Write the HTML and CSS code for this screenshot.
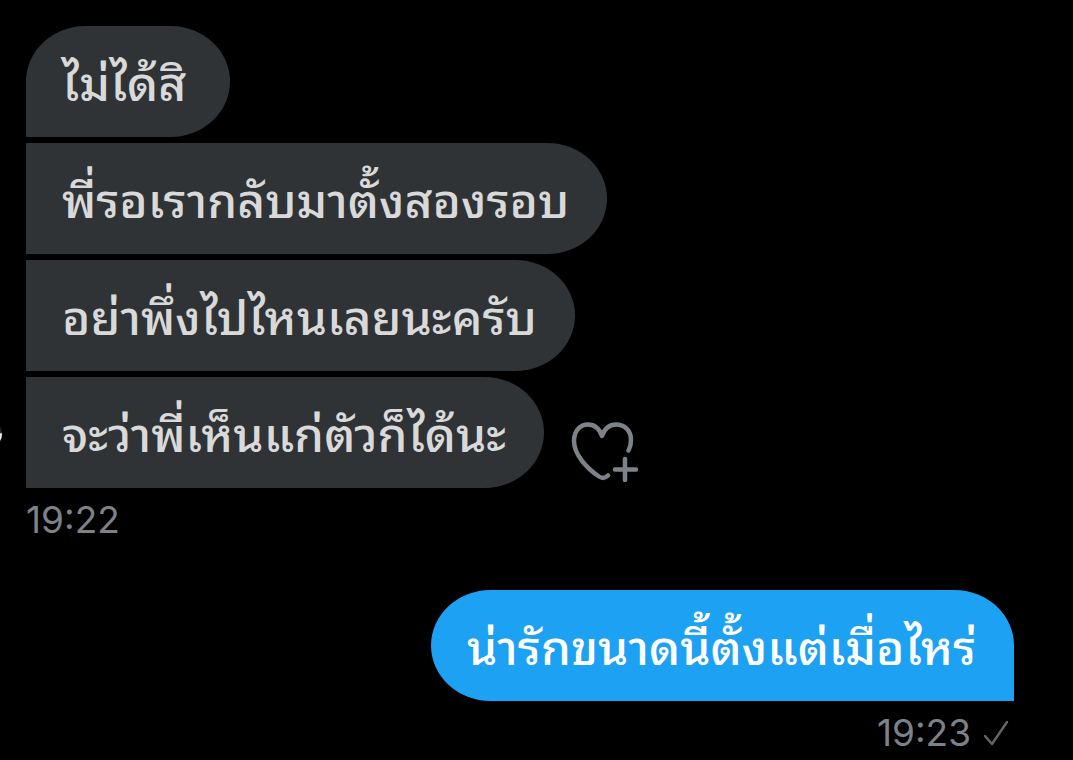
FILE: index.html
```html
<!DOCTYPE html>
<html lang="th">
<head>
<meta charset="utf-8">
<title>Messages</title>
<link rel="stylesheet" href="styles.css">
</head>
<body>
<main class="chat">
  <div class="avatar" aria-hidden="true"></div>
  <section class="group received">
    <p class="bubble first">ไม่ได้สิ</p>
    <p class="bubble">พี่รอเรากลับมาตั้งสองรอบ</p>
    <p class="bubble">อย่าพึ่งไปไหนเลยนะครับ</p>
    <div class="row">
      <p class="bubble">จะว่าพี่เห็นแก่ตัวก็ได้นะ</p>
      <button class="react" type="button" aria-label="Add reaction">
        <svg viewBox="0 0 68 62" fill="none" stroke="currentColor" stroke-width="4.500" stroke-linecap="round" stroke-linejoin="round"><path d="M37 55.500C34.500 58 31 58.500 28 56.500C15 48 3 34 3 21C3 11 9 4.500 17 4.500C24 4.500 28.500 9 31 16C33.500 9 38 4.500 45 4.500C54 4.500 60 11 60 20C60 24 59.500 27 57.500 30.500M54 39V60M44 49.500H65"/></svg>
      </button>
    </div>
    <time class="stamp">19:22</time>
  </section>
  <section class="group sent">
    <p class="bubble">น่ารักขนาดนี้ตั้งแต่เมื่อไหร่</p>
    <div class="stamp status"><time>19:23</time>
      <svg class="check" viewBox="0 0 26 26" fill="none" stroke="currentColor" stroke-width="2.400" stroke-linecap="round" stroke-linejoin="round"><path d="M2 16L9 24L24 2"/></svg>
    </div>
  </section>
</main>
</body>
</html>
```
FILE: styles.css
```css
* { box-sizing: border-box; }
body { margin: 0; background: #000; font-family: Inter, "Noto Sans Thai Looped", Loma, Garuda, Waree, Umpush, Laksaman, "Tlwg Typo", Norasi, "Noto Serif Thai", "Noto Sans Thai", sans-serif; }
.chat { position: relative; padding: 26px 59px 0 26px; }
.avatar { position: absolute; left: -30px; top: 418px; width: 32px; height: 32px; border-radius: 50%; background: linear-gradient(#222 45%, #eee 50%, #eee 65%, #444 75%); }
.group { display: flex; flex-direction: column; gap: 6px; align-items: flex-start; }
.sent { align-items: flex-end; margin-top: 44px; }
.row { display: flex; align-items: flex-end; gap: 27px; }
.bubble { margin: 0; min-width: 204px; min-height: 111px; padding: 22px 38px 17px 36px; border-radius: 0 60px 60px 0 / 0 56px 56px 0; background: #2f3336; color: #d9d9d9; font-size: 48px; font-weight: 500; line-height: 72px; white-space: nowrap; }
.first { border-top-left-radius: 60px 56px; }
.sent .bubble { background: #1da1f2; color: #fff; border-radius: 60px 60px 0 60px / 56px 56px 0 56px; }
.react { width: 68px; height: 62px; margin-bottom: 6px; padding: 0; border: 0; background: none; color: #7d8188; }
.react svg { display: block; width: 100%; height: 100%; }
.stamp { color: #7d8188; font-size: 37px; line-height: 52px; }
.status { display: flex; align-items: center; gap: 12px; padding-right: 5px; }
.check { width: 26px; height: 26px; color: #666; }
```
